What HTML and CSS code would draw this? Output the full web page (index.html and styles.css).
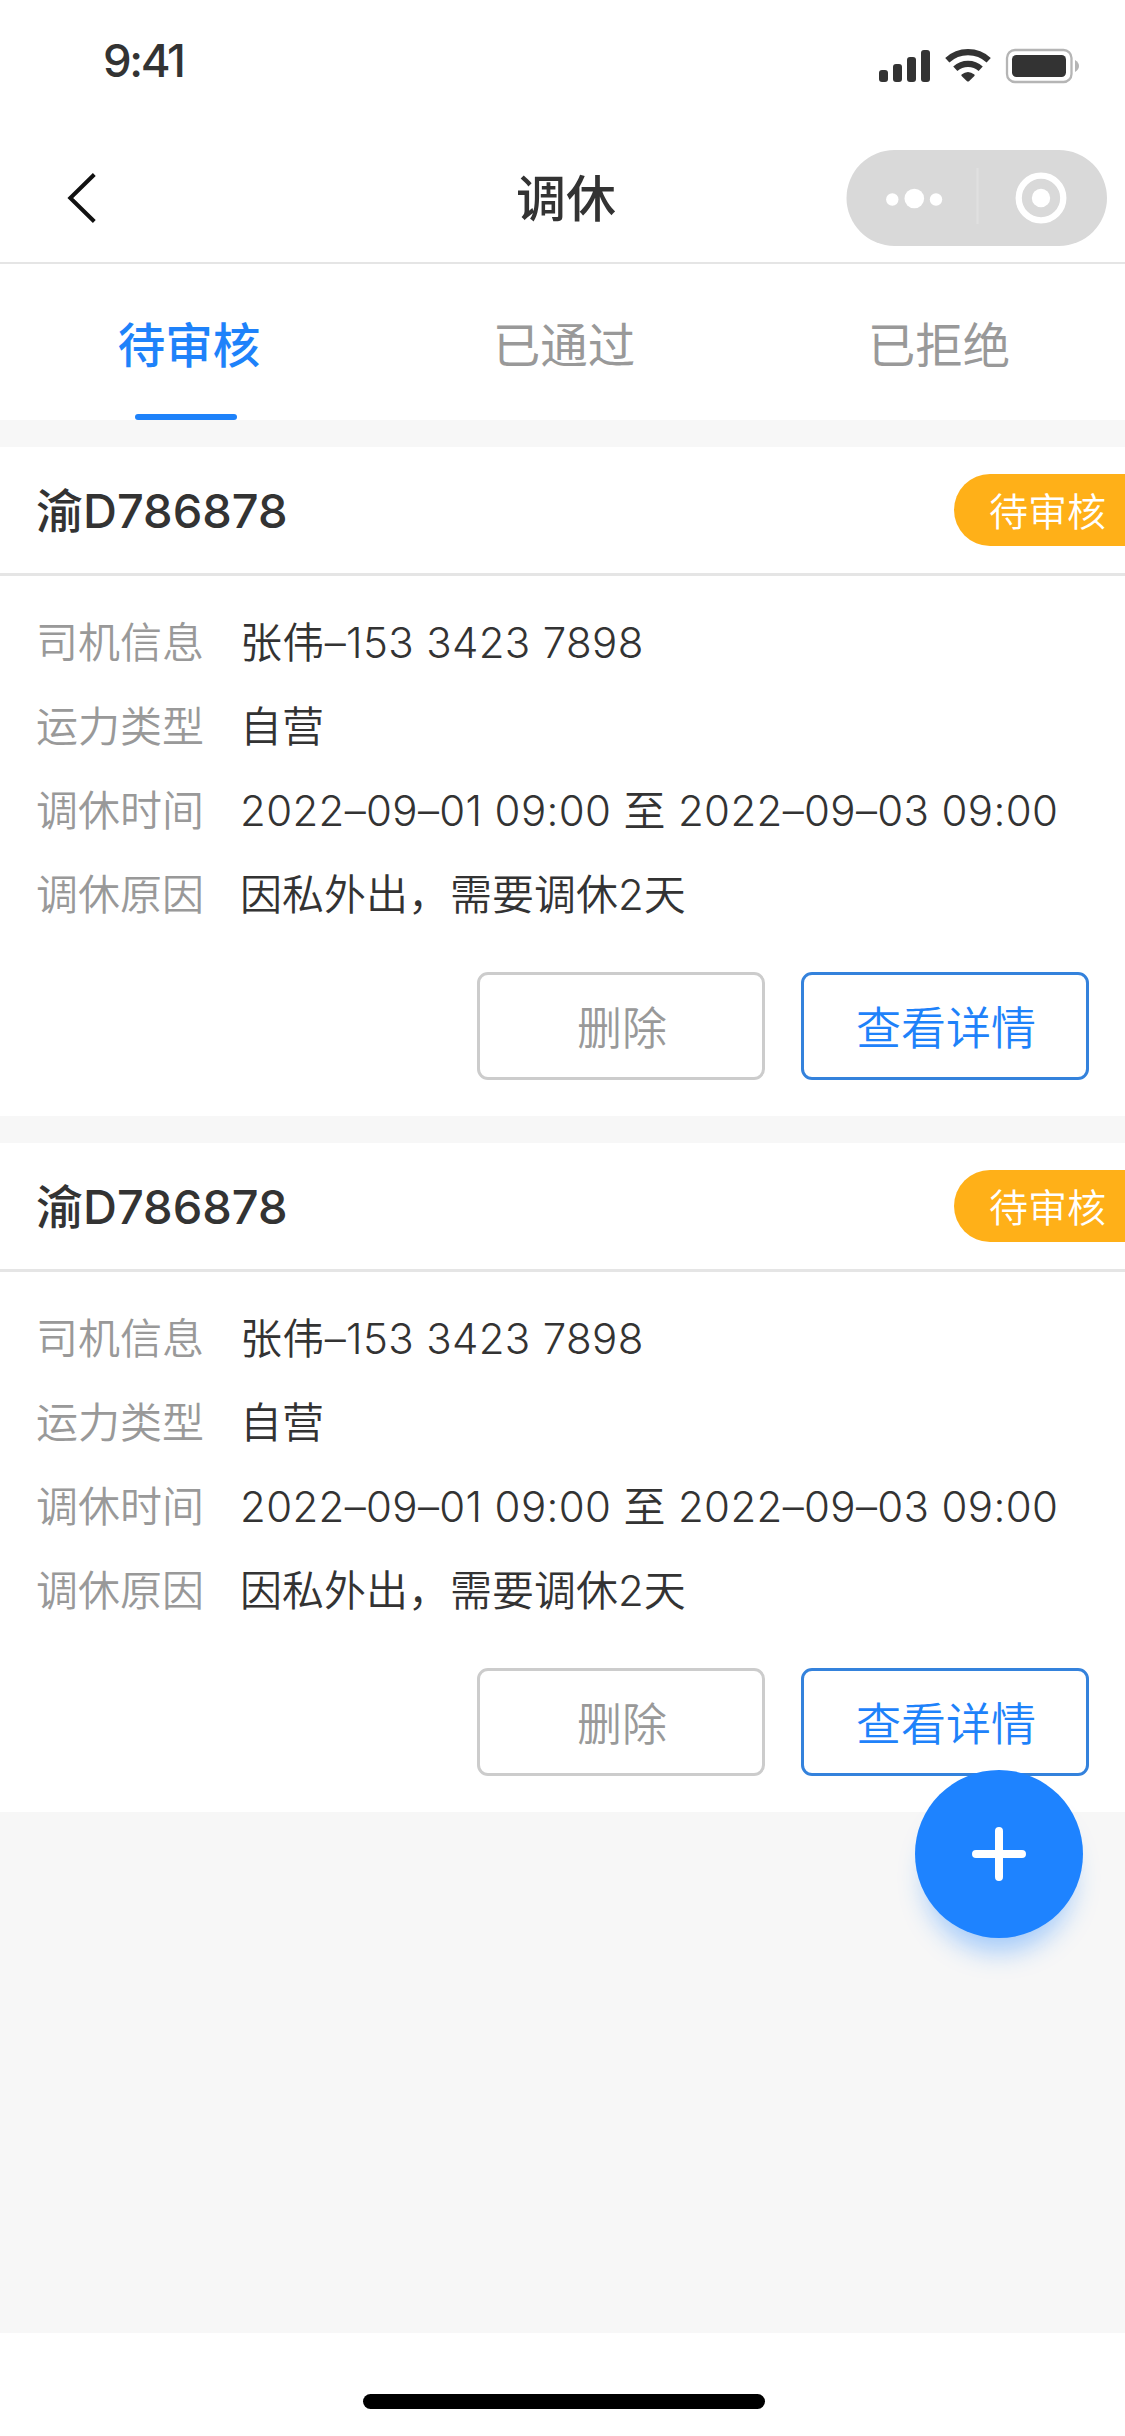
FILE: index.html
```html
<!DOCTYPE html>
<html lang="zh-CN">
<head>
<meta charset="utf-8">
<title>调休</title>
<link rel="stylesheet" href="styles.css">
</head>
<body>
<div class="screen">
  <header class="status">
    <span class="time">9:41</span>
    <svg class="status-icons" width="204" height="36" viewBox="877 48 204 36">
      <g fill="#333">
        <rect x="879" y="70" width="9" height="12" rx="3"/>
        <rect x="893" y="64" width="9" height="18" rx="3"/>
        <rect x="907" y="57" width="9" height="25" rx="3"/>
        <rect x="921" y="50" width="9" height="32" rx="3"/>
        <path d="M961.600 74.500Q968 69.500 974.400 74.500Q975 75.200 974.400 75.900L969 81.200Q968 82 967 81.200L961.600 75.900Q961 75.200 961.600 74.500Z"/>
        <rect x="1012" y="55" width="54" height="22" rx="4.500"/>
      </g>
      <g fill="none" stroke="#333" stroke-width="6.200">
        <path d="M947.300 60.300A30.500 30.500 0 0 1 988.700 60.300"/>
        <path d="M955.300 68.700A19 19 0 0 1 980.700 68.700"/>
      </g>
      <rect x="1007" y="50" width="64.500" height="32" rx="8" fill="none" stroke="#b5b5b5" stroke-width="2.300"/>
      <path d="M1075 60Q1079 62.500 1079 66T1075 72Z" fill="#b5b5b5"/>
    </svg>
  </header>
  <nav class="nav">
    <svg class="back" width="30" height="54" viewBox="66 171 30 54"><path d="M94.300 174.500L70.300 198L94.300 221.500" fill="none" stroke="#111" stroke-width="4"/></svg>
    <h1 class="title">调休</h1>
    <svg class="capsule" width="262" height="96" viewBox="846 150 262 96">
      <rect x="846.500" y="150" width="260.500" height="96" rx="48" fill="#d9d9d9"/>
      <g fill="#fff">
        <circle cx="892.300" cy="199.500" r="6.200"/><circle cx="914.300" cy="198.500" r="9.800"/><circle cx="936" cy="199.500" r="6.200"/>
        <circle cx="1041" cy="198" r="9.200"/>
      </g>
      <path d="M977.500 168V224" stroke="#e0e0e0" stroke-width="2"/>
      <circle cx="1041" cy="198" r="22.300" fill="none" stroke="#fff" stroke-width="6.300"/>
    </svg>
  </nav>
  <div class="tabs">
    <div class="tab active">待审核</div>
    <div class="tab">已通过</div>
    <div class="tab">已拒绝</div>
  </div>
  <main class="list">
    <section class="card">
      <div class="card-head"><h2 class="plate">渝D786878</h2><span class="badge">待审核</span></div>
      <dl class="info">
        <dt>司机信息</dt><dd class="phone">张伟–153 3423 7898</dd>
        <dt>运力类型</dt><dd>自营</dd>
        <dt>调休时间</dt><dd class="dates">2022–09–01 09:00 至 2022–09–03 09:00</dd>
        <dt>调休原因</dt><dd>因私外出，需要调休2天</dd>
      </dl>
      <div class="actions"><button class="btn">删除</button><button class="btn primary">查看详情</button></div>
    </section>
    <section class="card">
      <div class="card-head"><h2 class="plate">渝D786878</h2><span class="badge">待审核</span></div>
      <dl class="info">
        <dt>司机信息</dt><dd class="phone">张伟–153 3423 7898</dd>
        <dt>运力类型</dt><dd>自营</dd>
        <dt>调休时间</dt><dd class="dates">2022–09–01 09:00 至 2022–09–03 09:00</dd>
        <dt>调休原因</dt><dd>因私外出，需要调休2天</dd>
      </dl>
      <div class="actions"><button class="btn">删除</button><button class="btn primary">查看详情</button></div>
    </section>
  </main>
  <footer class="home"><div class="home-bar"></div></footer>
  <button class="fab" aria-label="新增"><svg width="54" height="54" viewBox="0 0 54 54"><path d="M27 4V50M4 27H50" stroke="#fff" stroke-width="8" stroke-linecap="round"/></svg></button>
</div>
</body>
</html>
```
FILE: styles.css
```css
* { box-sizing: border-box; margin: 0; padding: 0; }
body { background: #f7f7f7; color: #333; font-family: Inter, "Noto Sans CJK SC", sans-serif; }
.screen { position: relative; display: flex; flex-direction: column; width: 1125px; height: 2436px; overflow: hidden; }
.status { display: flex; justify-content: space-between; align-items: flex-start; height: 132px; padding: 32px 44px 0 103px; background: #fff; }
.time { font-size: 45.500px; line-height: 57px; font-weight: 500; letter-spacing: -2.400px; }
.status-icons { margin-top: 16px; }
.nav { display: grid; grid-template-columns: 262px 1fr 262px; align-items: center; height: 132px; padding: 2px 17px 0 66px; background: #fff; border-bottom: 2px solid #e5e5e5; }
.title { padding: 1px 0 0 188px; font-size: 50px; line-height: 72px; font-weight: 500; }
.capsule { justify-self: end; }
.tabs { display: grid; grid-template-columns: repeat(3, 375px); height: 156px; background: #fff; }
.tab { display: flex; flex-direction: column; align-items: center; padding: 46px 0 0 3px; font-size: 47.500px; line-height: 72px; color: #999; }
.tab.active { color: #1e82fa; font-weight: 500; }
.tab.active::after { content: ""; width: 102px; height: 6px; margin: 32px 6px 0 0; border-radius: 3px; background: #1e82fa; }
.list { flex: 1; display: flex; flex-direction: column; gap: 27px; padding-top: 27px; }
.card { height: 669px; background: #fff; }
.card-head { display: flex; align-items: center; justify-content: space-between; height: 129px; padding-left: 36px; border-bottom: 3px solid #e5e5e5; }
.plate { padding-top: 2px; font-size: 47px; line-height: 72px; font-weight: 500; }
.badge { width: 171px; height: 72px; padding: 2px 0 0 35px; border-radius: 36px 0 0 36px; background: #ffb018; color: #fff; font-size: 39px; line-height: 72px; font-weight: 350; }
.info { display: grid; grid-template-columns: 204px 1fr; grid-auto-rows: 84px; padding: 25px 0 0 36px; font-size: 42px; line-height: 84px; font-weight: 350; white-space: nowrap; }
.info dt { color: #999; }
.phone { letter-spacing: .35px; }
.dates { letter-spacing: .35px; }
.actions { display: flex; justify-content: flex-end; gap: 36px; padding: 35px 36px 0 0; }
.btn { width: 288px; height: 108px; padding: 5px 0 0 2px; border: 3px solid #ccc; border-radius: 11px; background: #fff; color: #999; font: 350 45px/72px Inter, "Noto Sans CJK SC", sans-serif; }
.btn.primary { border-color: #3482dc; color: #1e82fa; }
.home { height: 103px; padding: 61px 0 0 2px; background: #fff; }
.home-bar { width: 402px; height: 15px; margin: 0 auto; border-radius: 8px; background: #000; }
.fab { position: absolute; left: 915px; top: 1770px; display: flex; align-items: center; justify-content: center; width: 168px; height: 168px; border: 0; border-radius: 50%; background: #1e83ff; box-shadow: 0 24px 26px -10px rgba(30, 131, 255, .38); }
```
